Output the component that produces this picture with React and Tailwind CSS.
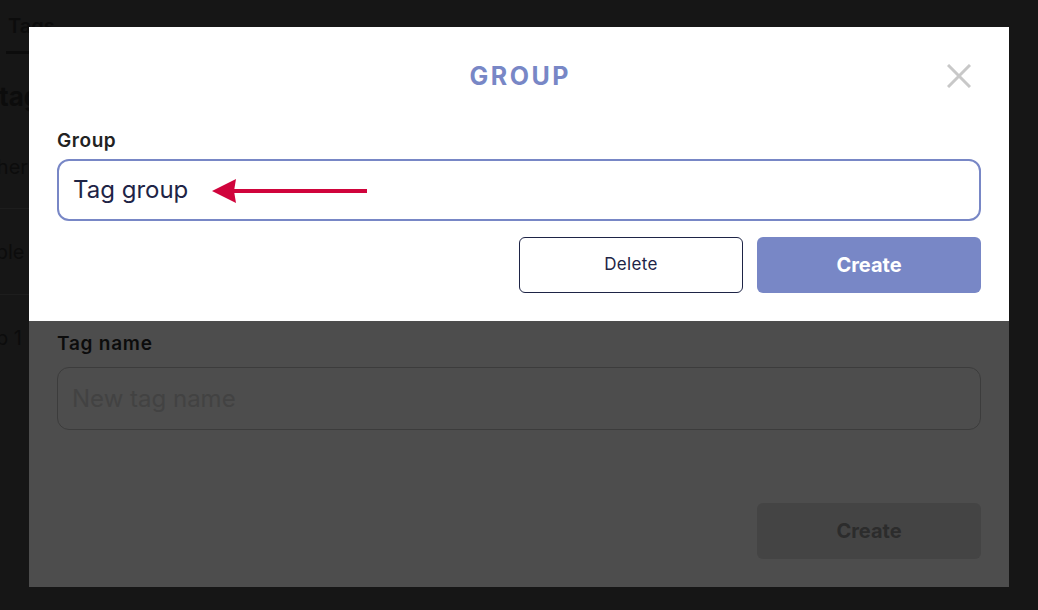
const font = { fontFamily: 'Inter, "Liberation Sans", sans-serif' };

const BackgroundPage = () => (
  <div className="h-full w-full overflow-hidden text-[#0c0c0c]">
    <div className="pl-[8px] pt-[12px]">
      <div className="text-[20px] font-semibold leading-[28px]">Tags</div>
      <div className="mt-[11px] -ml-[2px] h-[3px] w-[56px] bg-[#0c0c0c]" />
    </div>
    <div className="mt-[26px] -ml-[1px] text-[26px] font-bold leading-[34px]">tags</div>
    <div className="mt-[15px] flex w-[200px] flex-col">
      <div className="flex h-[80px] items-center border-b border-[#1d1d1d] -ml-[25px] pb-[4px] text-[20px]">Other</div>
      <div className="flex h-[86px] items-center border-b border-[#1d1d1d] -ml-[27px] text-[20px]">Table</div>
      <div className="flex h-[86px] items-center -ml-[50px] text-[20px]">Group 1</div>
    </div>
  </div>
);

const Arrow = () => (
  <svg width="160" height="26" viewBox="0 0 160 26" className="absolute left-[155px] top-[19px]">
    <polygon points="0,13 24,1 22,13 24,25" fill="#d0043c" />
    <rect x="20" y="11" width="135" height="4" fill="#d0043c" />
  </svg>
);

const CloseIcon = () => (
  <svg width="24" height="24" viewBox="0 0 24 24" className="absolute right-[10px] top-[5px]">
    <path d="M1 1 L23 23 M23 1 L1 23" stroke="#c8c8c8" strokeWidth="3" />
  </svg>
);

const GroupDialog = () => (
  <div className="h-[294px] bg-white px-[28px] pt-[32px]">
    <div className="relative flex h-[36px] items-center justify-center">
      <h2 className="pl-[0.1em] text-[25px] font-bold tracking-[0.1em] text-[#7887c6]">GROUP</h2>
      <CloseIcon />
    </div>
    <label className="mt-[34px] block text-[19px] font-semibold leading-[24px] tracking-[0.03em] text-[#222222]">Group</label>
    <div className="relative mt-[6px]">
      <div className="flex h-[62px] items-center rounded-[12px] border-2 border-[#7887c6] px-[14px] text-[24px] text-[#1e2446]">
        Tag group
      </div>
      <Arrow />
    </div>
    <div className="mt-[16px] flex justify-end gap-[14px]">
      <button className="h-[56px] w-[224px] rounded-[6px] border border-[#1e2446] text-[17px] tracking-[0.02em] text-[#1e2446]">Delete</button>
      <button className="h-[56px] w-[224px] rounded-[6px] bg-[#7887c6] text-[20px] font-bold text-white">Create</button>
    </div>
  </div>
);

const TagDialogDimmed = () => (
  <div className="flex-1 px-[28px] pt-[11px]">
    <label className="block text-[19px] font-semibold leading-[24px] tracking-[0.04em] text-[#0c0c0c]">Tag name</label>
    <div className="mt-[11px] flex h-[63px] items-center rounded-[12px] border border-[#3c3c3c] px-[14px] text-[24px] text-[#424242]">
      New tag name
    </div>
    <div className="mt-[73px] flex justify-end">
      <button className="h-[56px] w-[224px] rounded-[6px] bg-[#444444] text-[20px] font-bold text-[#2c2c2c]">Create</button>
    </div>
  </div>
);

export default function App() {
  return (
    <div className="relative h-[610px] w-[1038px] overflow-hidden bg-[#161616]" style={font}>
      <BackgroundPage />
      <div className="absolute left-[29px] top-[27px] flex h-[560px] w-[980px] flex-col bg-[#4d4d4d]">
        <GroupDialog />
        <TagDialogDimmed />
      </div>
    </div>
  );
}
